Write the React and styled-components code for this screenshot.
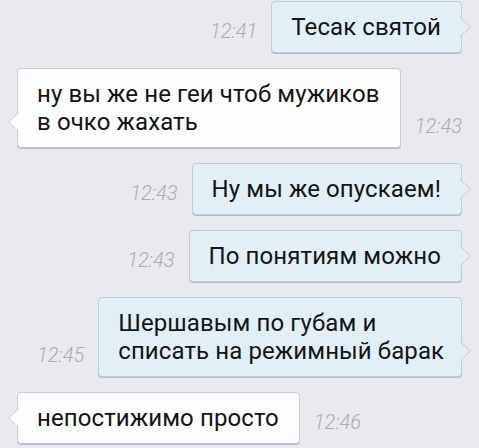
import React from "react"
import styled, { createGlobalStyle } from "styled-components"

const GlobalStyle = createGlobalStyle`
  html, body {
    margin: 0;
    padding: 0;
    background: #e7eaee;
  }
  body {
    font-family: Roboto, "Noto Sans", sans-serif;
  }
`

const Screen = styled.div`
  width: 479px;
  height: 448px;
  overflow: hidden;
  background: #e7eaee;
  padding-top: 1px;
  box-sizing: border-box;
  display: flex;
  flex-direction: column;
  gap: 15px;
`

const Row = styled.div`
  display: flex;
  align-items: flex-end;
  gap: 14px;
  justify-content: ${(p) => (p.$out ? "flex-end" : "flex-start")};
  padding: ${(p) => (p.$out ? "0 17px 0 37px" : "0 17px 0 17px")};
`

const Bubble = styled.div`
  position: relative;
  flex: ${(p) => (p.$fill ? "1 1 auto" : "0 1 auto")};
  min-width: 0;
  box-sizing: border-box;
  padding: 11px 20px 11px 19px;
  border-radius: 4px;
  border: 1px solid #c3ccd5;
  box-shadow: 0 1px 0 #b4bec8;
  background: ${(p) => (p.$out ? "#e2eff7" : "#fbfcfc")};
  color: #141414;
  font-size: 24px;
  line-height: 28px;
  letter-spacing: 0.1px;
  white-space: pre;
`

const Tail = styled.svg`
  position: absolute;
  bottom: 15px;
  width: 12px;
  height: 20px;
  ${(p) => (p.$out ? "right: -11px;" : "left: -11px; transform: scaleX(-1);")}
`

const Time = styled.div`
  flex: none;
  font-size: 20px;
  font-style: italic;
  font-weight: 300;
  color: #a8adb4;
  padding-bottom: 11px;
  line-height: 22px;
`

const messages = [
  { out: true, text: "Тесак святой", time: "12:41" },
  { out: false, text: "ну вы же не геи чтоб мужиков\nв очко жахать", time: "12:43", fill: true },
  { out: true, text: "Ну мы же опускаем!", time: "12:43" },
  { out: true, text: "По понятиям можно", time: "12:43" },
  { out: true, text: "Шершавым по губам и\nсписать на режимный барак", time: "12:45" },
  { out: false, text: "непостижимо просто", time: "12:46" },
]

const Message = ({ out, text, time, fill }) => {
  const bubble = (
    <Bubble $out={out} $fill={fill}>
      {text}
      <Tail $out={out} viewBox="0 0 12 20">
        <path d="M0 0 L11 10 L0 20 Z" fill={out ? "#e2eff7" : "#fbfcfc"} />
        <path d="M0 0.5 L10.5 10 L0 19.5" fill="none" stroke="#c3ccd5" strokeWidth="1" />
      </Tail>
    </Bubble>
  )
  return (
    <Row $out={out}>
      {out && <Time>{time}</Time>}
      {bubble}
      {!out && <Time>{time}</Time>}
    </Row>
  )
}

export default function App() {
  return (
    <Screen>
      <GlobalStyle />
      {messages.map((m, i) => (
        <Message key={i} {...m} />
      ))}
    </Screen>
  )
}
